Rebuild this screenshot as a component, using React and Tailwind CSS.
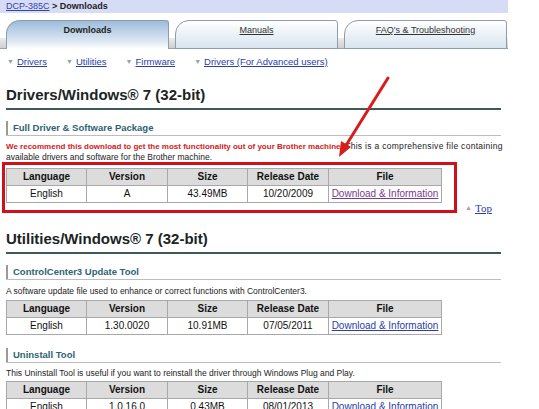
import React from 'react';

const cols = ['Language', 'Version', 'Size', 'Release Date', 'File'];

function DownloadTable({ row, visited }) {
  return (
    <table className="border-collapse text-[10px] text-[#111] w-[435px] table-fixed">
      <colgroup>
        <col className="w-[80px]" />
        <col className="w-[81px]" />
        <col className="w-[80px]" />
        <col className="w-[81px]" />
        <col className="w-[113px]" />
      </colgroup>
      <thead>
        <tr>
          {cols.map((c) => (
            <th key={c} className="h-[17px] p-0 border border-[#a8a8a8] bg-[#dcdcdc] font-bold text-center leading-none">
              {c}
            </th>
          ))}
        </tr>
      </thead>
      <tbody>
        <tr>
          {row.map((v, i) => (
            <td key={i} className="h-[17px] p-0 border border-[#a8a8a8] text-center leading-none">
              {i === 4 ? (
                <a className={`underline ${visited ? 'text-[#7b3a8c]' : 'text-[#2a40a8]'}`}>{v}</a>
              ) : (
                v
              )}
            </td>
          ))}
        </tr>
      </tbody>
    </table>
  );
}

function SectionHeading({ children, className = '' }) {
  return (
    <div className={`ml-[6px] w-[495px] border-b-2 border-[#3f5858] pb-[4px] ${className}`}>
      <h2 className="text-[15px] leading-[18px] font-bold text-[#1a2424]">{children}</h2>
    </div>
  );
}

function SubHeading({ children, className = '' }) {
  return (
    <div className={`ml-[6px] w-[495px] border-b border-[#bdbdbd] ${className}`}>
      <div className="border-l-2 border-[#9a9a9a] pl-[5px] text-[9.5px] leading-[14px] font-bold text-[#2d6374]">
        {children}
      </div>
    </div>
  );
}

function Tab({ label, active }) {
  return (
    <div
      className={`w-[163px] h-[29px] rounded-tl-[14px] rounded-tr-[3px] border border-[#8f9caa] text-center text-[9px] pt-[3px] ${
        active
          ? 'border-b-0 bg-[linear-gradient(to_bottom,#9dbcdc,#dbe6f1_70%,#ffffff)] font-bold text-[#222]'
          : 'h-[28px] bg-[linear-gradient(to_bottom,#ffffff,#d8e4ef)] text-[#333]'
      }`}
    >
      <span className={active ? '' : 'underline'}>{label}</span>
    </div>
  );
}

export default function App() {
  const links = ['Drivers', 'Utilities', 'Firmware', 'Drivers (For Advanced users)'];

  return (
    <div className="relative w-[539px] h-[409px] overflow-hidden bg-white font-['Liberation_Sans',Arial,sans-serif]">
      {/* Breadcrumb */}
      <div className="w-[508px] h-[13px] bg-[#d6dcf6] pl-[6px] text-[9px] leading-[13px] text-[#222]">
        <a className="underline text-[#3446a6]">DCP-385C</a>
        <span className="font-bold"> &gt; Downloads</span>
      </div>

      {/* Tabs */}
      <div className="mt-[7px] w-[508px] h-[29px] flex items-start gap-[6px] pl-[6px] border-b border-[#9aa3ad] bg-[linear-gradient(to_bottom,transparent_18px,#ececec_18px,#cfcfcf)]">
        <Tab label="Downloads" active />
        <Tab label="Manuals" />
        <Tab label="FAQ's & Troubleshooting" />
      </div>

      {/* Section links */}
      <div className="mt-[7px] ml-[7px] flex gap-[19px] text-[9.5px] leading-[12px]">
        {links.map((l) => (
          <div key={l} className="flex items-center gap-[3px]">
            <span className="text-[#9aa0a8] text-[7px]">▼</span>
            <a className="underline text-[#2a40a8]">{l}</a>
          </div>
        ))}
      </div>

      <SectionHeading className="mt-[18px]">Drivers/Windows® 7 (32-bit)</SectionHeading>
      <SubHeading className="mt-[11px]">Full Driver &amp; Software Package</SubHeading>

      <p className="mt-[5px] ml-[6px] w-[510px] text-[8.5px] leading-[10px] text-[#222]">
        <span className="font-bold text-[#d42020] text-[8px]">
          We recommend this download to get the most functionality out of your Brother machine.
        </span>{' '}
        <span className="tracking-[0.3px]">This is a comprehensive file containing</span>
        <br />
        available drivers and software for the Brother machine.
      </p>

      <div className="flex items-end ml-[2px]">
        <div className="w-[455px] border-[3px] border-[#d0111b] pl-[1px] pt-[3px] pb-[7px]">
          <DownloadTable row={['English', 'A', '43.49MB', '10/20/2009', 'Download & Information']} visited />
        </div>
        <div className="ml-[8px] mb-[-1px] flex items-center gap-[3px] font-['Liberation_Serif',serif] text-[11px] leading-[12px]">
          <span className="text-[#a0a4aa] text-[7px]">▲</span>
          <a className="underline text-[#2a40a8]">Top</a>
        </div>
      </div>

      <SectionHeading className="mt-[17px]">Utilities/Windows® 7 (32-bit)</SectionHeading>
      <SubHeading className="mt-[11px]">ControlCenter3 Update Tool</SubHeading>
      <p className="mt-[6px] ml-[6px] text-[8.5px] leading-[10px] text-[#222]">
        A software update file used to enhance or correct functions with ControlCenter3.
      </p>
      <div className="mt-[4px] ml-[6px]">
        <DownloadTable row={['English', '1.30.0020', '10.91MB', '07/05/2011', 'Download & Information']} />
      </div>

      <SubHeading className="mt-[13px]">Uninstall Tool</SubHeading>
      <p className="mt-[5px] ml-[6px] text-[8.5px] leading-[10px] text-[#222]">
        This Uninstall Tool is useful if you want to reinstall the driver through Windows Plug and Play.
      </p>
      <div className="mt-[3px] ml-[6px]">
        <DownloadTable row={['English', '1.0.16.0', '0.43MB', '08/01/2013', 'Download & Information']} />
      </div>

      {/* Annotation arrow */}
      <svg className="absolute left-0 top-0 pointer-events-none" width="539" height="409">
        <line x1="388" y1="78" x2="345" y2="147" stroke="#d81c1c" strokeWidth="3" strokeLinecap="round" />
        <polygon points="339,157 351,147 341,141" fill="#d81c1c" />
      </svg>
    </div>
  );
}
